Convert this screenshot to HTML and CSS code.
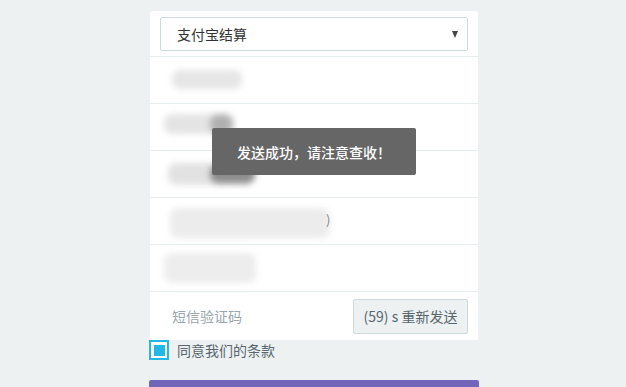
FILE: index.html
```html
<!DOCTYPE html>
<html lang="zh-CN">
<head>
    <meta charset="UTF-8">
    <meta name="viewport" content="width=device-width, initial-scale=1.0">
    <title>支付宝结算</title>
    <link rel="stylesheet" href="styles.css">
</head>
<body>
    <div class="wrap">
        <div class="panel">
            <div class="row row-select">
                <div class="select">
                    <span>支付宝结算</span>
                    <span class="caret"></span>
                </div>
            </div>
            <div class="row"><div class="smudge s1"></div></div>
            <div class="row"><div class="smudge s2"></div><div class="smudge s2d"></div></div>
            <div class="row"><div class="smudge s3"></div><div class="smudge s3d"></div></div>
            <div class="row"><div class="smudge s4"></div><span class="paren">)</span></div>
            <div class="row"><div class="smudge s5"></div></div>
            <div class="row row-sms">
                <span class="placeholder">短信验证码</span>
                <button class="resend">(59) s 重新发送</button>
            </div>
        </div>
        <label class="agree">
            <span class="check"><span class="check-fill"></span></span>
            同意我们的条款
        </label>
        <div class="submit"></div>
        <div class="toast">发送成功，请注意查收！</div>
    </div>
</body>
</html>
```

FILE: styles.css
```css
* { margin: 0; padding: 0; box-sizing: border-box; }
body {
    font-family: "Noto Sans CJK SC", "Noto Sans", sans-serif;
    background: #edf1f2;
    color: #333;
    font-size: 14px;
    height: 387px;
    overflow: hidden;
}
.wrap {
    width: 330px;
    margin: 0 auto;
    padding-top: 11px;
    position: relative;
    left: 1px;
}
.panel {
    background: white;
    border-radius: 3px 3px 0 0;
    margin-left: 1px;
    width: 328px;
}
.row {
    height: 47px;
    border-bottom: 1px solid #e8edef;
    position: relative;
    overflow: hidden;
}
.row-select {
    height: 46px;
    padding: 6px 10px 0 10px;
}
.select {
    height: 34px;
    border: 1px solid #cfdadd;
    border-radius: 2px;
    display: flex;
    align-items: center;
    justify-content: space-between;
    padding: 0 9px 0 16px;
    font-size: 14px;
    color: #333;
}
.caret {
    width: 0; height: 0;
    border-left: 3.5px solid transparent;
    border-right: 3.5px solid transparent;
    border-top: 7px solid #444;
}
/* blurred personal data */
.smudge {
    position: absolute;
    border-radius: 8px;
    filter: blur(3px);
}
.s1 { left: 22px; top: 13px; width: 70px; height: 19px; background: #e6e6e6; }
.s2 { left: 14px; top: 10px; width: 70px; height: 20px; background: #e4e4e4; }
.s2d { left: 60px; top: 11px; width: 22px; height: 18px; background: #b0b0b0; }
.s3 { left: 18px; top: 12px; width: 85px; height: 22px; background: #e2e2e2; }
.s3d { left: 60px; top: 14px; width: 45px; height: 18px; background: #8c8c8c; }
.s4 { left: 20px; top: 10px; width: 160px; height: 30px; background: #ececec; }
.s5 { left: 14px; top: 8px; width: 92px; height: 30px; background: #ededed; }
.paren {
    position: absolute;
    left: 176px; top: 12px;
    color: #888;
    font-size: 13px;
}
.row-sms {
    border-bottom: none;
    height: 48px;
    display: flex;
    align-items: center;
    justify-content: space-between;
    padding: 0 10px 0 22px;
}
.placeholder { color: #98a6ad; font-size: 14px; }
.resend {
    font-family: inherit;
    font-size: 14px;
    color: #58666e;
    background: #edf1f2;
    border: 1px solid #cfdadd;
    border-radius: 2px;
    width: 115px;
    height: 35px;
}
.agree {
    display: flex;
    align-items: center;
    gap: 8px;
    height: 20px;
    color: #58666e;
    font-size: 14px;
}
.check {
    width: 20px; height: 20px;
    border: 2px solid #23b7e5;
    display: flex;
    align-items: center;
    justify-content: center;
    background: white;
}
.check-fill { width: 11px; height: 11px; background: #23b7e5; }
.submit {
    margin-top: 20px;
    height: 40px;
    background: #7266ba;
    border-radius: 2px;
}
.toast {
    position: absolute;
    left: 63px; top: 128px;
    width: 204px;
    height: 47px;
    background: #666;
    border-radius: 2px;
    color: white;
    font-weight: 500;
    font-size: 14px;
    display: flex;
    align-items: center;
    justify-content: center;
}
```
